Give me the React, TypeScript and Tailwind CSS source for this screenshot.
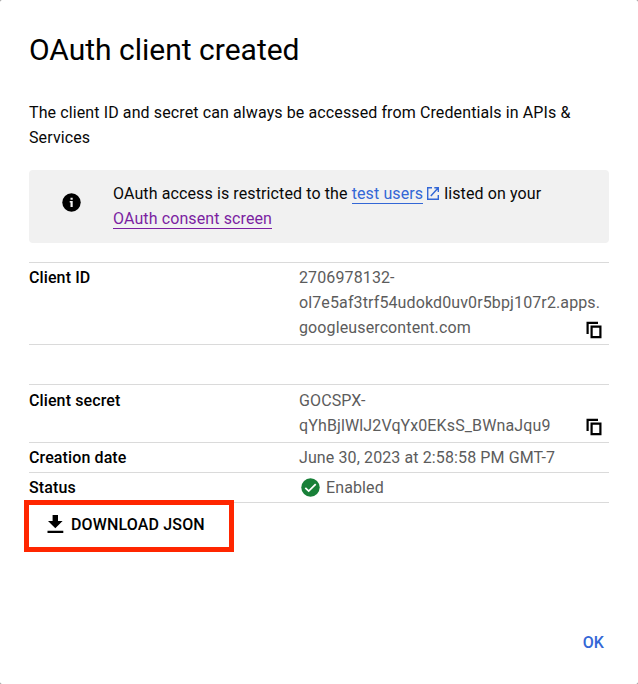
import type { ReactNode } from 'react';

function CopyIcon({ className }: { className: string }) {
  return (
    <svg className={`ml-auto mr-[7px] h-[18px] w-4 self-end ${className}`} viewBox="0 0 16 18" fill="none" stroke="#000" strokeWidth="2.2">
      <path d="M1.6 13V1.9H12" />
      <path d="M5.6 5.6h8.8v10.6H5.6z" />
    </svg>
  );
}

function Row({ label, className, children }: { label: string; className: string; children: ReactNode }) {
  return (
    <div className={`flex border-t border-[#dadada] ${className}`}>
      <div className="w-[270px] shrink-0 font-medium text-black">{label}</div>
      <div className="flex flex-1 text-[#5c5c5c]">{children}</div>
    </div>
  );
}

export default function App() {
  return (
    <div className="bg-[#8a8a8a]">
      <main className="flex h-[684px] w-[638px] flex-col rounded-[2px] bg-white px-[29px] font-['Roboto',sans-serif] text-[16px] leading-[25px] tracking-[0.11px] text-[#080808]">
        <h1 className="mt-8 text-[30px] leading-9 tracking-normal text-black">OAuth client created</h1>
        <p className="mt-8">
          The client ID and secret can always be accessed from Credentials in APIs &amp;
          <br />
          Services
        </p>
        <div className="mt-5 flex h-[73px] items-start rounded bg-[#f1f1f1] pt-[11px]">
          <svg className="ml-8 mr-8 mt-[11px] size-5" viewBox="0 0 20 20">
            <circle cx="10.5" cy="10.5" r="9.2" fill="#000" />
            <path d="M8.7 9h3v6H9.5v-4.6h-.8zM9.5 5.8h2.2v2H9.5z" fill="#f1f1f1" />
          </svg>
          <p>
            OAuth access is restricted to the{' '}
            <a className="inline-block h-[23px] border-b border-[#3367d6] text-[#3367d6]">test users</a>
            <svg className="ml-1 mr-[5px] inline-block h-[13px] w-3 align-[-1px]" viewBox="0 0 12 13" fill="none" stroke="#3367d6" strokeWidth="1.4">
              <path d="M5 .7H.7v11.6h10.6V8M7.3.7h4v4.4M11.3.7 3.8 9" />
            </svg>
            listed on your
            <br />
            <a className="inline-block h-[23px] border-b border-[#7b1fa2] text-[#7b1fa2]">OAuth consent screen</a>
          </p>
        </div>
        <Row label="Client ID" className="mt-[19px] h-[82px] pt-[2px]">
          <p className="w-0 whitespace-nowrap tracking-[0.12px]">
            2706978132-
            <br />
            ol7e5af3trf54udokd0uv0r5bpj107r2.apps.
            <br />
            googleusercontent.com
          </p>
          <CopyIcon className="mb-[5px]" />
        </Row>
        <div className="h-10 shrink-0 border-t border-[#dadada]" />
        <Row label="Client secret" className="h-[58px] pt-[3px]">
          <p className="tracking-[0.13px]">
            GOCSPX-
            <br />
            qYhBjlWlJ2VqYx0EKsS_BWnaJqu9
          </p>
          <CopyIcon className="mb-[6px]" />
        </Row>
        <Row label="Creation date" className="h-[30px] pt-[2px]">June 30, 2023 at 2:58:58 PM GMT-7</Row>
        <Row label="Status" className="h-[31px] border-b pt-[2px]">
          <svg className="ml-[2px] mr-[6px] mt-[3px] size-[19px]" viewBox="0 0 19 19">
            <circle cx="9.5" cy="9.5" r="9.2" fill="#188038" />
            <path d="m4.3 9.8 3.4 3.3 7-7" fill="none" stroke="#fff" strokeWidth="1.8" />
          </svg>
          Enabled
        </Row>
        <button className="relative -ml-[5px] -mt-[3px] flex h-[52px] w-[210px] shrink-0 items-center border-[5px] border-[#ff2600] pb-[3px] pl-[18px] text-left font-medium tracking-[0.15px] text-black">
          <svg className="mr-[7px] h-[19px] w-[17px]" viewBox="0 0 17 19" fill="#000">
            <path d="M5.6 0h5.4v6h4.6l-7.3 7.2L1 6h4.6zM.5 15.8h15.8v2.2H.5z" />
          </svg>
          DOWNLOAD JSON
        </button>
        <button className="mr-[5px] mt-auto mb-[29px] self-end font-medium text-[#3367d6]">OK</button>
      </main>
    </div>
  );
}
